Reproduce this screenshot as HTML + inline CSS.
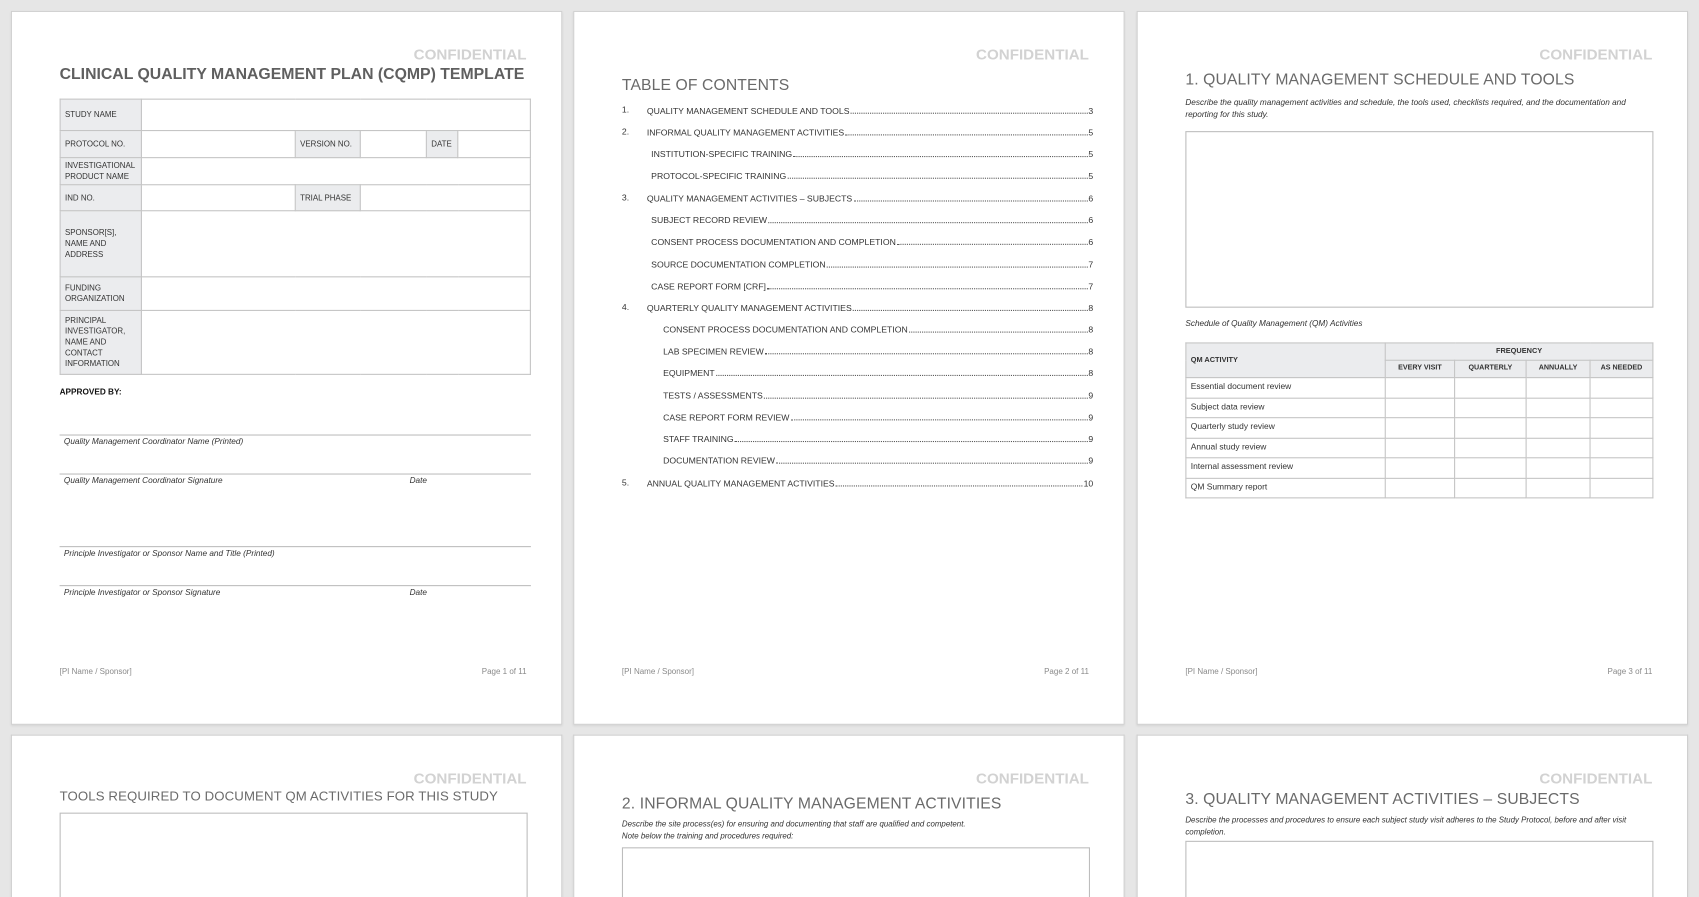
<!DOCTYPE html>
<html><head><meta charset="utf-8"><style>
html,body{margin:0;padding:0;width:1699px;height:897px;overflow:hidden;background:#e6e6e6}
#w{position:absolute;left:0;top:0;width:1568px;height:828px;overflow:hidden;transform:scale(1.0835);transform-origin:0 0;font-family:"Liberation Sans","DejaVu Sans",sans-serif;color:#333;background:#e6e6e6}
.pg{position:absolute;width:507px;height:657px;background:#fff;border:1px solid #cfcfcf;box-shadow:0 1px 2px rgba(0,0,0,.08)}
.pg.b{height:150px;border-bottom:none;overflow:hidden}
.a{position:absolute;white-space:nowrap;line-height:1}
.conf{font-weight:bold;color:#d2d2d2;font-size:14px;right:32px;top:32px}
.h{color:#6a6a6a;font-size:14.5px;letter-spacing:.1px}
.it{font-style:italic;font-size:7.6px;color:#333}
.ft{font-size:7.4px;color:#8a8a8a;top:605px}
.box{position:absolute;border:1px solid #bdbdbd}
table{border-collapse:collapse;position:absolute;table-layout:fixed}
td{border:1px solid #c4c4c4;font-size:7.3px;padding:0 4px;color:#333;line-height:1.35}
td.l{background:#ebecee}
.toc{position:absolute;left:44px;width:435px;font-size:8px;color:#333;line-height:1}
.toc div{position:absolute;display:flex;align-items:baseline;right:0}
.toc .n{position:absolute;left:0}
.toc .d{flex:1;border-bottom:1px dotted #555;margin:0 1px;height:6px}
.ln{position:absolute;height:0;border-top:1px solid #bdbdbd}
</style></head><body><div id="w">

<!-- page 1 -->
<div class="pg" style="left:10px;top:10px">
<div class="a conf">CONFIDENTIAL</div>
<div class="a" style="left:44px;top:51px;font-size:14.6px;font-weight:bold;color:#5f5f5f">CLINICAL QUALITY MANAGEMENT PLAN (CQMP) TEMPLATE</div>
<table style="left:44px;top:80px;width:435px">
<colgroup><col style="width:75px"><col style="width:142px"><col style="width:60px"><col style="width:61px"><col style="width:29px"><col></colgroup>
<tr style="height:29px"><td class="l">STUDY NAME</td><td colspan="5"></td></tr>
<tr style="height:25px"><td class="l">PROTOCOL NO.</td><td></td><td class="l">VERSION NO.</td><td></td><td class="l">DATE</td><td></td></tr>
<tr style="height:25px"><td class="l">INVESTIGATIONAL PRODUCT NAME</td><td colspan="5"></td></tr>
<tr style="height:24px"><td class="l">IND NO.</td><td></td><td class="l">TRIAL PHASE</td><td colspan="3"></td></tr>
<tr style="height:61px"><td class="l">SPONSOR[S],<br>NAME AND<br>ADDRESS</td><td colspan="5"></td></tr>
<tr style="height:31px"><td class="l">FUNDING ORGANIZATION</td><td colspan="5"></td></tr>
<tr style="height:59px"><td class="l">PRINCIPAL INVESTIGATOR, NAME AND CONTACT INFORMATION</td><td colspan="5"></td></tr>
</table>
<div class="a" style="left:44px;top:347px;font-size:7.6px;font-weight:bold;color:#111">APPROVED BY:</div>
<div class="ln" style="left:44px;width:435px;top:390px"></div>
<div class="a it" style="left:48px;top:393px">Quality Management Coordinator Name (Printed)</div>
<div class="ln" style="left:44px;width:435px;top:426px"></div>
<div class="a it" style="left:48px;top:429px">Quality Management Coordinator Signature</div>
<div class="a it" style="left:367px;top:429px">Date</div>
<div class="ln" style="left:44px;width:435px;top:493px"></div>
<div class="a it" style="left:48px;top:496px">Principle Investigator or Sponsor Name and Title (Printed)</div>
<div class="ln" style="left:44px;width:435px;top:529px"></div>
<div class="a it" style="left:48px;top:532px">Principle Investigator or Sponsor Signature</div>
<div class="a it" style="left:367px;top:532px">Date</div>
<div class="a ft" style="left:44px">[PI Name / Sponsor]</div>
<div class="a ft" style="right:32px">Page 1 of 11</div>
</div>

<!-- page 2 -->
<div class="pg" style="left:529px;top:10px">
<div class="a conf">CONFIDENTIAL</div>
<div class="a h" style="left:44px;top:61px">TABLE OF CONTENTS</div>
<div class="toc">
<div style="top:87px;left:0"><span class="n">1.</span><span style="padding-left:23px">QUALITY MANAGEMENT SCHEDULE AND TOOLS</span><span class="d"></span>3</div>
<div style="top:107px;left:0"><span class="n">2.</span><span style="padding-left:23px">INFORMAL QUALITY MANAGEMENT ACTIVITIES</span><span class="d"></span>5</div>
<div style="top:127px;left:27px"><span>INSTITUTION-SPECIFIC TRAINING</span><span class="d"></span>5</div>
<div style="top:147px;left:27px"><span>PROTOCOL-SPECIFIC TRAINING</span><span class="d"></span>5</div>
<div style="top:168px;left:0"><span class="n">3.</span><span style="padding-left:23px">QUALITY MANAGEMENT ACTIVITIES – SUBJECTS</span><span class="d"></span>6</div>
<div style="top:188px;left:27px"><span>SUBJECT RECORD REVIEW</span><span class="d"></span>6</div>
<div style="top:208px;left:27px"><span>CONSENT PROCESS DOCUMENTATION AND COMPLETION</span><span class="d"></span>6</div>
<div style="top:229px;left:27px"><span>SOURCE DOCUMENTATION COMPLETION</span><span class="d"></span>7</div>
<div style="top:249px;left:27px"><span>CASE REPORT FORM [CRF]</span><span class="d"></span>7</div>
<div style="top:269px;left:0"><span class="n">4.</span><span style="padding-left:23px">QUARTERLY QUALITY MANAGEMENT ACTIVITIES</span><span class="d"></span>8</div>
<div style="top:289px;left:38px"><span>CONSENT PROCESS DOCUMENTATION AND COMPLETION</span><span class="d"></span>8</div>
<div style="top:309px;left:38px"><span>LAB SPECIMEN REVIEW</span><span class="d"></span>8</div>
<div style="top:329px;left:38px"><span>EQUIPMENT</span><span class="d"></span>8</div>
<div style="top:350px;left:38px"><span>TESTS / ASSESSMENTS</span><span class="d"></span>9</div>
<div style="top:370px;left:38px"><span>CASE REPORT FORM REVIEW</span><span class="d"></span>9</div>
<div style="top:390px;left:38px"><span>STAFF TRAINING</span><span class="d"></span>9</div>
<div style="top:410px;left:38px"><span>DOCUMENTATION REVIEW</span><span class="d"></span>9</div>
<div style="top:431px;left:0"><span class="n">5.</span><span style="padding-left:23px">ANNUAL QUALITY MANAGEMENT ACTIVITIES</span><span class="d"></span>10</div>
</div>
<div class="a ft" style="left:44px">[PI Name / Sponsor]</div>
<div class="a ft" style="right:32px">Page 2 of 11</div>
</div>

<!-- page 3 -->
<div class="pg" style="left:1049px;top:10px">
<div class="a conf">CONFIDENTIAL</div>
<div class="a h" style="left:44px;top:56px">1. QUALITY MANAGEMENT SCHEDULE AND TOOLS</div>
<div class="a it" style="left:44px;top:78px;line-height:11px;white-space:normal;width:430px">Describe the quality management activities and schedule, the tools used, checklists required, and the documentation and reporting for this study.</div>
<div class="box" style="left:44px;top:110px;width:430px;height:161px"></div>
<div class="a it" style="left:44px;top:284px">Schedule of Quality Management (QM) Activities</div>
<table style="left:44px;top:305px;width:432px">
<colgroup><col style="width:184px"><col style="width:64px"><col style="width:66px"><col style="width:59px"><col></colgroup>
<tr style="height:16px"><td class="l" rowspan="2" style="font-weight:bold;font-size:6.8px">QM ACTIVITY</td><td class="l" colspan="4" style="text-align:center;font-weight:bold;font-size:6.8px">FREQUENCY</td></tr>
<tr style="height:16px"><td class="l" style="text-align:center;font-weight:bold;font-size:6.6px">EVERY VISIT</td><td class="l" style="text-align:center;font-weight:bold;font-size:6.6px">QUARTERLY</td><td class="l" style="text-align:center;font-weight:bold;font-size:6.6px">ANNUALLY</td><td class="l" style="text-align:center;font-weight:bold;font-size:6.6px">AS NEEDED</td></tr>
<tr style="height:18.5px"><td style="font-size:7.8px">Essential document review</td><td></td><td></td><td></td><td></td></tr>
<tr style="height:18.5px"><td style="font-size:7.8px">Subject data review</td><td></td><td></td><td></td><td></td></tr>
<tr style="height:18.5px"><td style="font-size:7.8px">Quarterly study review</td><td></td><td></td><td></td><td></td></tr>
<tr style="height:18.5px"><td style="font-size:7.8px">Annual study review</td><td></td><td></td><td></td><td></td></tr>
<tr style="height:18.5px"><td style="font-size:7.8px">Internal assessment review</td><td></td><td></td><td></td><td></td></tr>
<tr style="height:18.5px"><td style="font-size:7.8px">QM Summary report</td><td></td><td></td><td></td><td></td></tr>
</table>
<div class="a ft" style="left:44px">[PI Name / Sponsor]</div>
<div class="a ft" style="right:32px">Page 3 of 11</div>
</div>

<!-- row 2 -->
<div class="pg b" style="left:10px;top:678px">
<div class="a conf">CONFIDENTIAL</div>
<div class="a h" style="left:44px;top:50px;font-size:12.2px">TOOLS REQUIRED TO DOCUMENT QM ACTIVITIES FOR THIS STUDY</div>
<div class="box" style="left:44px;top:71px;width:430px;height:200px"></div>
</div>
<div class="pg b" style="left:529px;top:678px">
<div class="a conf">CONFIDENTIAL</div>
<div class="a h" style="left:44px;top:56px">2. INFORMAL QUALITY MANAGEMENT ACTIVITIES</div>
<div class="a it" style="left:44px;top:77px;font-size:7.3px;line-height:10.5px;white-space:normal;width:430px">Describe the site process(es) for ensuring and documenting that staff are qualified and competent.<br>Note below the training and procedures required:</div>
<div class="box" style="left:44px;top:103px;width:430px;height:200px"></div>
</div>
<div class="pg b" style="left:1049px;top:678px">
<div class="a conf">CONFIDENTIAL</div>
<div class="a h" style="left:44px;top:52px">3. QUALITY MANAGEMENT ACTIVITIES – SUBJECTS</div>
<div class="a it" style="left:44px;top:73px;font-size:7.3px;line-height:10.5px;white-space:normal;width:432px">Describe the processes and procedures to ensure each subject study visit adheres to the Study Protocol, before and after visit completion.</div>
<div class="box" style="left:44px;top:97px;width:430px;height:200px"></div>
</div>

</div></body></html>
